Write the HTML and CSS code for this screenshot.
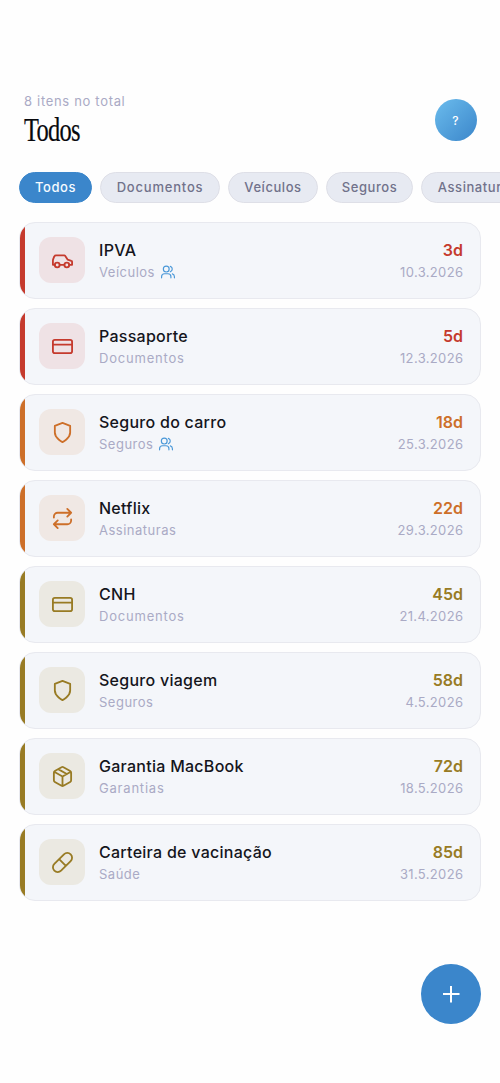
FILE: index.html
```html
<!DOCTYPE html>
<html lang="pt-BR">
<head>
<meta charset="utf-8">
<meta name="viewport" content="width=device-width, initial-scale=1">
<title>Todos</title>
<link rel="stylesheet" href="styles.css">
</head>
<body>
<svg class="defs" aria-hidden="true">
<symbol id="car" viewBox="0 0 24 24"><path d="M14 16.500H9M19 16.500h3v-3.200a1 1 0 0 0-.8-1L17.300 11l-2.600-3.900a1 1 0 0 0-.8-.4H5.200a2 2 0 0 0-1.800 1.100L2.400 10.200A5 5 0 0 0 2 12.200V16.500h2"/><circle cx="6.5" cy="16.700" r="2.5"/><circle cx="16.5" cy="16.700" r="2.5"/></symbol>
<symbol id="card" viewBox="0 0 24 24"><rect x="2" y="5" width="20" height="14" rx="2"/><path d="M2 10h20"/></symbol>
<symbol id="shield" viewBox="0 0 24 24"><path d="M12 22s8-4 8-10V5l-8-3-8 3v7c0 6 8 10 8 10"/></symbol>
<symbol id="repeat" viewBox="0 0 24 24"><path d="m17 2 4 4-4 4M3 11v-1a4 4 0 0 1 4-4h14M7 22l-4-4 4-4M21 13v1a4 4 0 0 1-4 4H3"/></symbol>
<symbol id="package" viewBox="0 0 24 24"><path d="m7.500 4.270 9 5.150M21 8a2 2 0 0 0-1-1.730l-7-4a2 2 0 0 0-2 0l-7 4A2 2 0 0 0 3 8v8a2 2 0 0 0 1 1.730l7 4a2 2 0 0 0 2 0l7-4A2 2 0 0 0 21 16ZM3.300 7l8.700 5 8.700-5M12 22V12"/></symbol>
<symbol id="pill" viewBox="0 0 24 24"><path d="m10.500 20.500 10-10a4.950 4.950 0 1 0-7-7l-10 10a4.950 4.950 0 1 0 7 7ZM8.500 8.500l7 7"/></symbol>
<symbol id="users" viewBox="0 0 24 24"><path d="M17 22v-2a5 5 0 0 0-5-5H6a5 5 0 0 0-5 5v2"/><circle cx="9" cy="7" r="5"/><path d="M23 22v-2a5 5 0 0 0-3.500-4.700M16 2.300a5 5 0 0 1 0 9.400"/></symbol>
</svg>
<header class="header">
<div><p class="count">8 itens no total</p><h1 class="title">Todos</h1></div>
<button class="avatar">?</button>
</header>
<nav class="chips">
<button class="chip active">Todos</button><button class="chip documentos">Documentos</button><button class="chip veiculos">Veículos</button><button class="chip seguros">Seguros</button><button class="chip assinaturas">Assinaturas</button>
</nav>
<main class="list">
<article class="item red"><span class="tile"><svg><use href="#car"/></svg></span><div class="info"><h2>IPVA</h2><p>Veículos <svg class="shared"><use href="#users"/></svg></p></div><div class="due"><b>3d</b><time>10.3.2026</time></div></article>
<article class="item red"><span class="tile"><svg><use href="#card"/></svg></span><div class="info"><h2>Passaporte</h2><p class="wide">Documentos</p></div><div class="due"><b>5d</b><time>12.3.2026</time></div></article>
<article class="item orange"><span class="tile"><svg><use href="#shield"/></svg></span><div class="info"><h2>Seguro do carro</h2><p>Seguros <svg class="shared"><use href="#users"/></svg></p></div><div class="due"><b>18d</b><time>25.3.2026</time></div></article>
<article class="item orange"><span class="tile"><svg><use href="#repeat"/></svg></span><div class="info"><h2>Netflix</h2><p>Assinaturas</p></div><div class="due"><b>22d</b><time>29.3.2026</time></div></article>
<article class="item gold"><span class="tile"><svg><use href="#card"/></svg></span><div class="info"><h2>CNH</h2><p class="wide">Documentos</p></div><div class="due"><b>45d</b><time>21.4.2026</time></div></article>
<article class="item gold"><span class="tile"><svg><use href="#shield"/></svg></span><div class="info"><h2>Seguro viagem</h2><p>Seguros</p></div><div class="due"><b>58d</b><time>4.5.2026</time></div></article>
<article class="item gold"><span class="tile"><svg><use href="#package"/></svg></span><div class="info"><h2>Garantia MacBook</h2><p class="wide">Garantias</p></div><div class="due"><b>72d</b><time>18.5.2026</time></div></article>
<article class="item gold"><span class="tile"><svg><use href="#pill"/></svg></span><div class="info"><h2>Carteira de vacinação</h2><p>Saúde</p></div><div class="due"><b>85d</b><time>31.5.2026</time></div></article>
</main>
<button class="fab" aria-label="Adicionar"><svg viewBox="0 0 24 24"><path d="M4 12h16.500M12 4v16.500"/></svg></button>
</body>
</html>
```
FILE: styles.css
```css
* { box-sizing: border-box; margin: 0; }
body { height: 1083px; overflow: hidden; background: #fefefe; color: #14151c; font-family: Inter, "Open Sans", sans-serif; }
button { font: inherit; border: 0; padding: 0; }
svg { fill: none; stroke: currentColor; stroke-linecap: round; stroke-linejoin: round; }
.defs { display: none; }
.header { display: flex; justify-content: space-between; padding: 92px 23.5px 0 24px; height: 172px; }
.count { font-size: 13px; line-height: 18px; letter-spacing: .68px; color: #aaaac5; }
.title { font: 400 33px/41px "Liberation Serif", serif; letter-spacing: -1px; transform: scaleX(.74); transform-origin: left; color: #08090d; -webkit-text-stroke: .2px #08090d; }
.avatar { width: 42px; height: 42px; margin-top: 7px; border-radius: 50%; background: linear-gradient(135deg, #6bbced, #3b86ca); color: #fff; font-size: 12px; font-weight: 500; }
.chips { display: flex; gap: 8px; padding-left: 19px; overflow: hidden; }
.chip { flex: none; height: 30.5px; border: 1px solid #dedfe7; border-radius: 16px; background: #e7eaf2; color: #71728b; font-size: 13px; font-weight: 450; letter-spacing: .55px; width: 120px; }
.chip.active { width: 73px; background: #3b86cb; border-color: #3b86cb; color: #f5faff; }
.chip.documentos { letter-spacing: .8px; }
.chip.veiculos { width: 90px; }
.chip.seguros { width: 87px; }
.chip.assinaturas { width: 113px; }
.list { display: grid; grid-auto-rows: 76.5px; gap: 9.5px; padding: 19.5px 19px 0; }
.item { position: relative; display: flex; align-items: center; overflow: hidden; padding: 0 17px 0 19px; border: 1px solid #e8e9ef; border-radius: 16px; background: #f4f6fa; }
.item::before { content: ""; position: absolute; left: 0; top: -1px; bottom: -1px; width: 5px; background: var(--accent); }
.red { --accent: #c53a2d; --tint: #efe2e5; }
.orange { --accent: #cd6f29; --tint: #f0e8e4; }
.gold { --accent: #987b24; --tint: #ebe9e2; }
.tile { display: grid; place-items: center; width: 46px; height: 46px; border-radius: 12px; background: var(--tint); color: var(--accent); }
.tile svg { width: 23px; height: 23px; stroke-width: 1.9; }
.info { flex: 1; padding: 2px 0 0 14px; }
.info h2 { font-size: 16px; font-weight: 450; line-height: 22px; letter-spacing: .27px; white-space: nowrap; }
.info p { display: flex; align-items: center; gap: 6px; font-size: 13px; line-height: 22px; letter-spacing: .5px; color: #aaaac5; }
.info .wide { letter-spacing: .8px; }
.shared { width: 14px; height: 14px; stroke-width: 2; color: #4a98d8; }
.due { padding-top: 2px; text-align: right; }
.due b { display: block; font-size: 16px; font-weight: 600; line-height: 22px; color: var(--accent); }
.due time { display: block; font-size: 13px; line-height: 22px; letter-spacing: .35px; margin-right: -.35px; color: #aaaac5; }
.fab { position: absolute; left: 421px; top: 964px; width: 60px; height: 60px; border-radius: 50%; background: #3b86cb; color: #fff; display: grid; place-items: center; }
.fab svg { width: 24px; height: 24px; stroke-width: 2; stroke-linecap: butt; }
```
